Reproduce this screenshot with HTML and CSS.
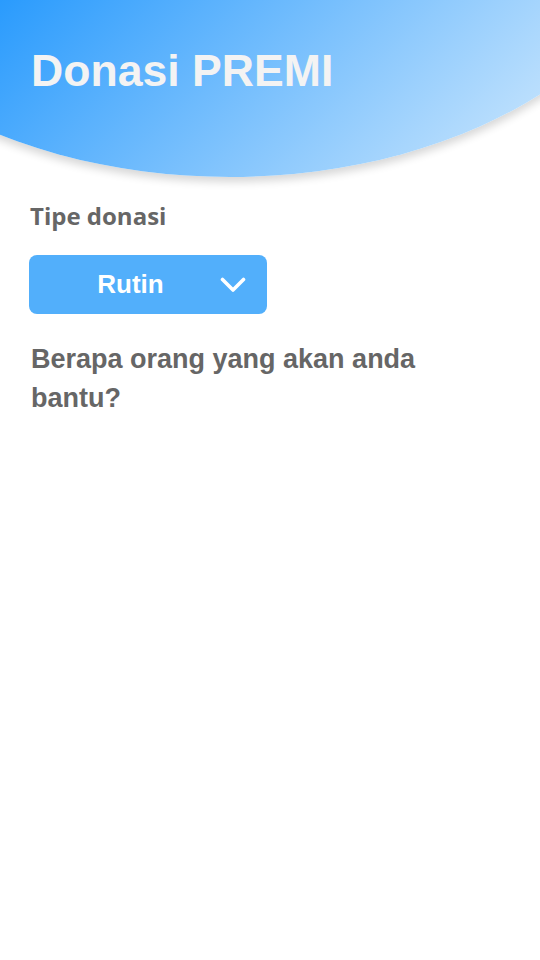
FILE: index.html
```html
<!DOCTYPE html>
<html lang="id">
<head>
<meta charset="utf-8">
<title>Donasi PREMI</title>
<link rel="stylesheet" href="styles.css">
</head>
<body>
<div class="page">
  <header class="hero">
    <h1 class="hero-title">Donasi PREMI</h1>
  </header>
  <main class="content">
    <h2 class="label">Tipe donasi</h2>
    <div class="select">
      <span class="select-value">Rutin</span>
      <svg class="chevron" width="26" height="16" viewBox="0 0 26 16" aria-hidden="true">
        <polyline points="2.5,2.5 13,13 23.5,2.5" fill="none" stroke="#ffffff" stroke-width="3.6" stroke-linecap="round" stroke-linejoin="round"/>
      </svg>
    </div>
    <p class="question">Berapa orang yang akan anda bantu?</p>
  </main>
</div>
</body>
</html>
```
FILE: styles.css
```css
html, body {
  margin: 0;
  padding: 0;
  background: #ffffff;
}

.page {
  width: 540px;
  min-height: 960px;
  overflow: hidden;
}

.hero {
  box-sizing: border-box;
  width: 900px;
  height: 300px;
  margin: -123px 0 0 -220px;
  padding: 169px 0 0 251px;
  border-radius: 0 0 450px 450px / 0 0 300px 300px;
  background: linear-gradient(135deg, #2a9bfd 28.6%, #c8e5fd 86.5%);
  box-shadow: 0 5px 8px rgba(0, 0, 0, 0.16);
}

.hero-title {
  margin: 0;
  font-family: "Liberation Sans", Arial, sans-serif;
  font-weight: 700;
  font-size: 44.6px;
  line-height: 50px;
  color: #f3f3f3;
}

.content {
  padding: 24px 29px 0 29px;
}

.label {
  margin: 0 0 0 1px;
  font-family: "Open Sans", sans-serif;
  font-weight: 700;
  font-size: 24px;
  line-height: 30px;
  color: #666666;
}

.select {
  box-sizing: border-box;
  display: flex;
  align-items: center;
  width: 238px;
  height: 59px;
  margin-top: 24px;
  padding: 0 21px 0 12px;
  border-radius: 8px;
  background: #52affb;
}

.select-value {
  flex: 1;
  text-align: center;
  font-family: "Liberation Sans", Arial, sans-serif;
  font-weight: 700;
  font-size: 26px;
  color: #ffffff;
}

.chevron {
  display: block;
  flex: none;
}

.question {
  width: 430px;
  margin: 26px 0 0 2px;
  font-family: "Liberation Sans", Arial, sans-serif;
  font-weight: 700;
  font-size: 27px;
  line-height: 39px;
  color: #666666;
}
```
